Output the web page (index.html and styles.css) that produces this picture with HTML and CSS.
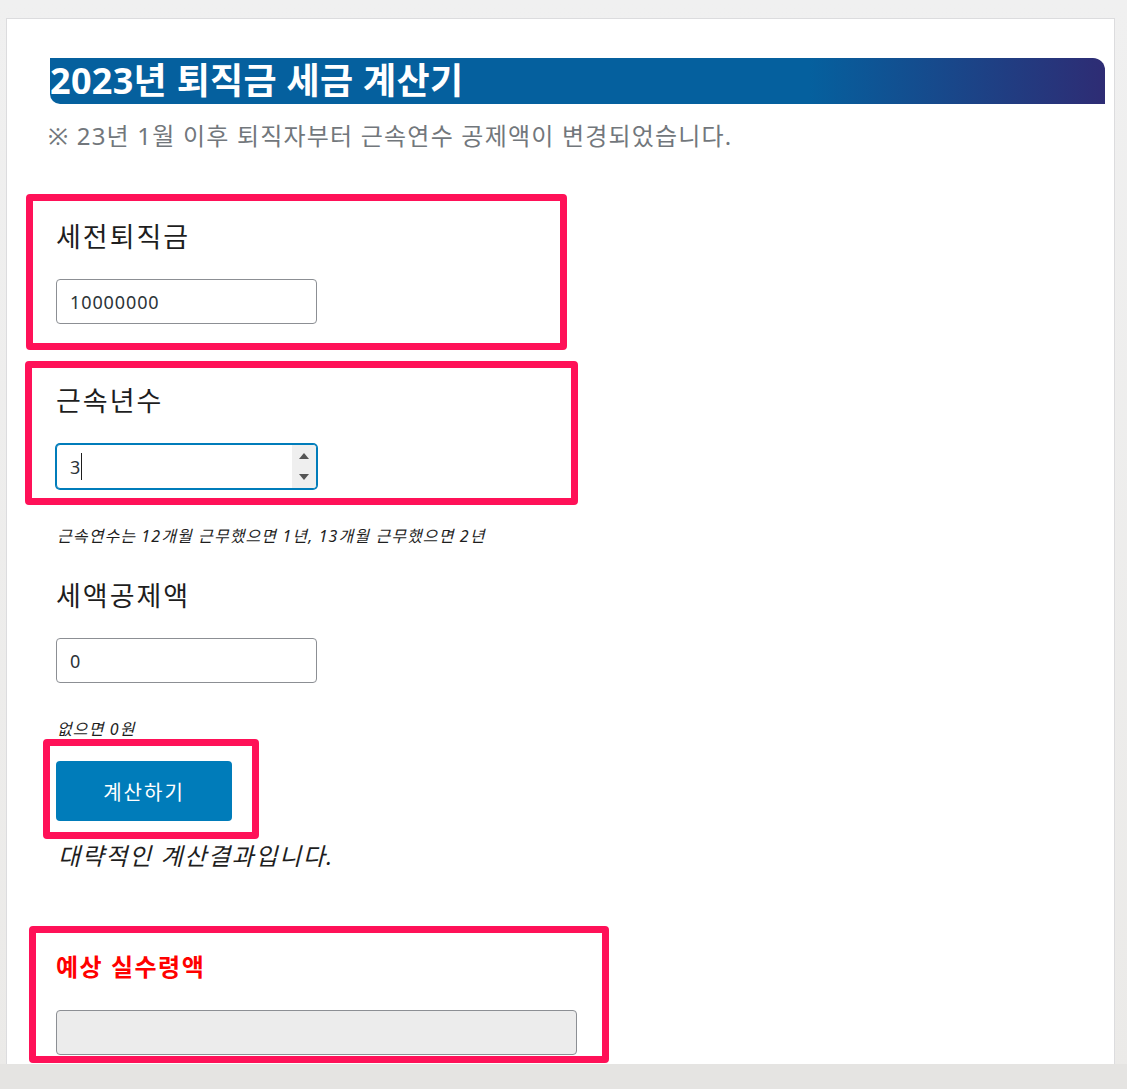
FILE: index.html
```html
<!DOCTYPE html>
<html lang="ko">
<head>
<meta charset="utf-8">
<title>2023년 퇴직금 세금 계산기</title>
<link rel="stylesheet" href="styles.css">
</head>
<body>
<div class="page">
  <div class="card">
    <h2 class="title">2023년 퇴직금 세금 계산기</h2>
    <p class="subtitle">※ 23년 1월 이후 퇴직자부터 근속연수 공제액이 변경되었습니다.</p>

    <div class="field field-1">
      <label class="label" for="pay">세전퇴직금</label>
      <input class="input" id="pay" type="text" value="10000000">
    </div>

    <div class="field field-2">
      <label class="label" for="years">근속년수</label>
      <div class="input-wrap">
        <input class="input input-focus" id="years" type="text" value="3">
        <span class="caret"></span>
        <span class="spinner"><span class="arrow-up"></span><span class="arrow-down"></span></span>
      </div>
    </div>
    <p class="help help-1">근속연수는 12개월 근무했으면 1년, 13개월 근무했으면 2년</p>

    <div class="field field-3">
      <label class="label" for="credit">세액공제액</label>
      <input class="input" id="credit" type="text" value="0">
    </div>
    <p class="help help-2">없으면 0원</p>

    <button class="btn" type="button">계산하기</button>
    <p class="note">대략적인 계산결과입니다.</p>

    <div class="result">
      <p class="result-label">예상 실수령액</p>
      <input class="input input-wide" type="text" readonly>
    </div>

    <div class="mark mark-1"></div>
    <div class="mark mark-2"></div>
    <div class="mark mark-3"></div>
    <div class="mark mark-4"></div>
  </div>
</div>
<div class="bottom-strip"></div>
</body>
</html>
```

FILE: styles.css
```css
html, body {
  margin: 0;
  padding: 0;
}
body {
  width: 1127px;
  height: 1089px;
  overflow: hidden;
  background: linear-gradient(to bottom, #f0f0f0 0%, #ebeae8 100%);
  font-family: "Noto Sans", "Noto Sans CJK KR", sans-serif;
  color: #1e1e1e;
  display: flex;
  flex-direction: column;
}
.page {
  flex: 1;
  padding: 18px 0 0 6px;
  overflow: hidden;
}
.card {
  position: relative;
  border: 1px solid #dcdcde;
  border-bottom: none;
  background: #fff;
  padding: 39px 9px 0 43px;
  box-sizing: border-box;
  width: 1109px;
  height: 1046px;
  overflow: hidden;
}
.bottom-strip {
  height: 25px;
  background: #e5e4e2;
}
.title {
  margin: 0;
  height: 46px;
  line-height: 46px;
  font-size: 36px;
  font-weight: 700;
  color: #fff;
  white-space: nowrap;
  background: linear-gradient(to right, #05609e 0%, #05609e 72%, #2e2c74 100%);
  border-radius: 0 12px 0 10px;
  letter-spacing: 0.3px;
}
.subtitle {
  margin: 16px 0 0 -2px;
  font-size: 24px;
  line-height: 32px;
  letter-spacing: 1.2px;
  color: #72777c;
  white-space: nowrap;
}
.field {
  padding-left: 6px;
}
.label {
  display: block;
  font-size: 27px;
  line-height: 36px;
  letter-spacing: 2px;
  color: #1e1e1e;
}
.field-1 { margin-top: 67px; }
.field-2 { margin-top: 59px; }
.field-3 { margin-top: 31px; }
.input {
  display: block;
  margin-top: 24px;
  width: 261px;
  height: 45px;
  box-sizing: border-box;
  border: 1px solid #8c8f94;
  border-radius: 4px;
  padding: 0 13px;
  font-family: "Noto Sans", "Noto Sans CJK KR", sans-serif;
  font-size: 18px;
  letter-spacing: 0.9px;
  color: #2c3338;
  background: #fff;
  outline: none;
}
.input-wrap {
  position: relative;
  width: 261px;
  margin-top: 25px;
}
.input-wrap .input {
  margin-top: 0;
}
.input-focus {
  border-color: #007cba;
  box-shadow: 0 0 0 1px #007cba;
}
.caret {
  position: absolute;
  left: 25px;
  top: 9px;
  width: 1px;
  height: 27px;
  background: #1e1e1e;
}
.spinner {
  position: absolute;
  right: 1px;
  top: 1px;
  bottom: 1px;
  width: 24px;
  background: #efefef;
  border-radius: 0 3px 3px 0;
}
.arrow-up, .arrow-down {
  position: absolute;
  left: 7px;
  width: 0;
  height: 0;
  border-left: 5px solid transparent;
  border-right: 5px solid transparent;
}
.arrow-up {
  top: 8px;
  border-bottom: 6px solid #555;
}
.arrow-down {
  bottom: 8px;
  border-top: 6px solid #555;
}
.help {
  margin: 0;
  padding-left: 7px;
  font-size: 16px;
  line-height: 22px;
  letter-spacing: 1.1px;
  font-style: italic;
  color: #1e1e1e;
  white-space: nowrap;
}
.help-1 { margin-top: 36px; }
.help-2 { margin-top: 35px; }
.btn {
  display: block;
  margin: 21px 0 0 6px;
  width: 176px;
  height: 60px;
  border: none;
  border-radius: 4px;
  background: #007cba;
  color: #fff;
  font-family: "Noto Sans", "Noto Sans CJK KR", sans-serif;
  font-size: 20px;
  letter-spacing: 2px;
  padding: 0;
}
.note {
  margin: 19px 0 0 8px;
  font-size: 24px;
  line-height: 32px;
  letter-spacing: 1.6px;
  font-style: italic;
  color: #1e1e1e;
}
.result {
  padding-left: 6px;
  margin-top: 79px;
}
.result-label {
  margin: 0;
  font-size: 24px;
  line-height: 32px;
  letter-spacing: 1.5px;
  font-weight: 700;
  color: #ff0000;
}
.result .input-wide {
  margin-top: 27px;
  width: 521px;
  background: #ececec;
}
.mark {
  position: absolute;
  box-sizing: border-box;
  border: 7px solid #ff1158;
  border-radius: 4px;
  pointer-events: none;
}
.mark-1 { left: 19px; top: 175px; width: 541px; height: 156px; }
.mark-2 { left: 18px; top: 342px; width: 553px; height: 144px; }
.mark-3 { left: 36px; top: 720px; width: 216px; height: 100px; }
.mark-4 { left: 22px; top: 907px; width: 580px; height: 137px; }
```
